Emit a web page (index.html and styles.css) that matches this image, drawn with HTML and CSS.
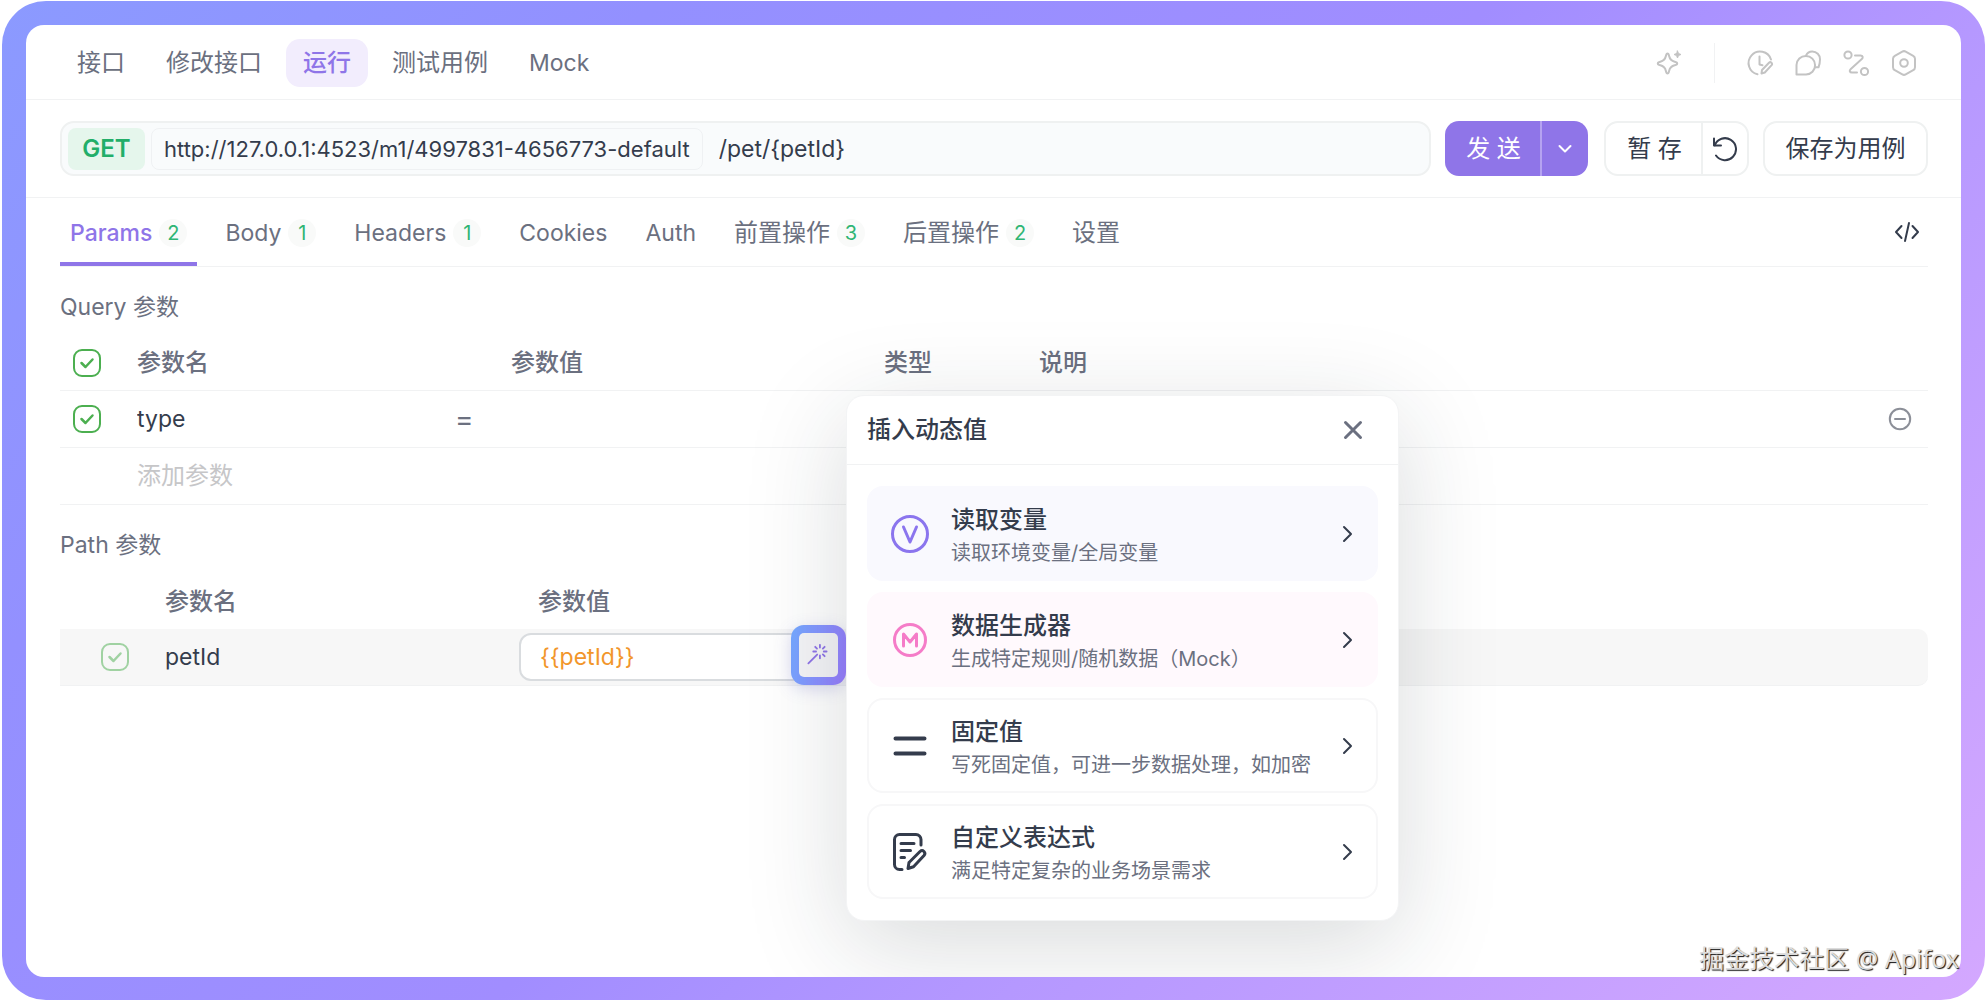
FILE: index.html
```html
<!DOCTYPE html>
<html lang="zh-CN">
<head>
<meta charset="utf-8">
<meta name="viewport" content="width=device-width, initial-scale=1">
<title>Apifox</title>
<link rel="stylesheet" href="styles.css">
</head>
<body>
<div class="frame">
  <main class="panel">
    <header class="topbar">
      <nav class="modes" aria-label="接口视图">
        <button class="mode" type="button">接口</button>
        <button class="mode" type="button">修改接口</button>
        <button class="mode mode-active" type="button">运行</button>
        <button class="mode" type="button">测试用例</button>
        <button class="mode latin" type="button">Mock</button>
      </nav>
      <div class="tools">
        <button class="tool" type="button" aria-label="AI">
          <svg width="28" height="28" viewBox="0 0 28 28"><path d="M12.500 4.500c.9 0 1.300 1.200 1.600 2.500.8 3.600 2 4.900 5.600 5.700 1.300.3 2.500.9 2.500 1.800s-1.200 1.500-2.500 1.800c-3.600.8-4.800 2.100-5.600 5.700-.3 1.300-.7 2.500-1.600 2.500s-1.300-1.200-1.600-2.500c-.8-3.600-2-4.900-5.600-5.700C4 16 2.800 15.400 2.800 14.500S4 13 5.300 12.700c3.600-.8 4.800-2.100 5.600-5.700.3-1.300.7-2.500 1.600-2.500z"/><path class="solid" d="M22.500 2l1 2.500L26 5.500l-2.500 1-1 2.500-1-2.500-2.500-1 2.500-1z"/></svg>
        </button>
        <span class="tools-divider"></span>
        <button class="tool" type="button" aria-label="历史记录">
          <svg width="28" height="28" viewBox="0 0 28 28"><path d="M11.500 25.300A11.500 11.500 0 1 1 25 10.500"/><path d="M13.500 7.500v8l3 .8"/><path d="M15.500 24.500l.5-3.500 7-7.300c1.600-1.500 4 .6 2.600 2.400l-6.800 7.400z"/></svg>
        </button>
        <button class="tool" type="button" aria-label="评论">
          <svg width="28" height="28" viewBox="0 0 28 28"><path d="M2.500 25.500v-9.500a9.300 9.300 0 1 1 9.500 9.500z"/><path d="M12 6.700C13 4 15.500 2.500 18.200 2.500c4.500 0 7.800 3.500 7.800 7.800 0 3-.5 5.500-1.500 8H21"/></svg>
        </button>
        <button class="tool" type="button" aria-label="流程">
          <svg width="28" height="28" viewBox="0 0 28 28"><circle cx="6" cy="6" r="3.600"/><circle cx="22.500" cy="22.500" r="3.600"/><path d="M13 6.500h5.500c2.500 0 2.800 2 1.300 3.600l-11 9.800c-1.800 1.700-1.200 3.600 1.200 3.600H15"/></svg>
        </button>
        <button class="tool" type="button" aria-label="设置">
          <svg width="28" height="28" viewBox="0 0 28 28"><path d="M12.300 2.600a3.500 3.500 0 0 1 3.400 0l7.500 4.200a3.500 3.500 0 0 1 1.800 3v8.400a3.500 3.500 0 0 1-1.800 3l-7.500 4.200a3.500 3.500 0 0 1-3.400 0l-7.500-4.200a3.500 3.500 0 0 1-1.800-3V9.800a3.500 3.500 0 0 1 1.800-3z"/><circle cx="14" cy="14" r="3.800"/></svg>
        </button>
      </div>
    </header>

    <form class="request">
      <div class="address">
        <select class="method" aria-label="请求方法"><option>GET</option></select>
        <button class="base-url" type="button">http://127.0.0.1:4523/m1/4997831-4656773-default</button>
        <input class="path latin" type="text" aria-label="接口路径" value="/pet/{petId}">
      </div>
      <div class="split split-primary">
        <button class="split-main" type="button">发 送</button>
        <button class="split-side" type="button" aria-label="更多发送选项">
          <svg width="14" height="10" viewBox="0 0 14 10"><path d="M1.500 2l5.500 5.500L12.500 2"/></svg>
        </button>
      </div>
      <div class="split split-plain">
        <button class="split-main" type="button">暂 存</button>
        <button class="split-side" type="button" aria-label="还原">
          <svg width="26" height="26" viewBox="0 0 26 26"><path d="M2 2.500v7h7"/><path d="M2.700 9.300A11 11 0 1 1 4 19.500"/></svg>
        </button>
      </div>
      <button class="save-case" type="button">保存为用例</button>
    </form>

    <div class="content">
      <nav class="tabs" aria-label="请求设置">
        <button class="tab tab-active latin" type="button">Params<span class="count">2</span></button>
        <button class="tab latin" type="button">Body<span class="count">1</span></button>
        <button class="tab latin" type="button">Headers<span class="count">1</span></button>
        <button class="tab latin" type="button">Cookies</button>
        <button class="tab latin" type="button">Auth</button>
        <button class="tab" type="button">前置操作<span class="count">3</span></button>
        <button class="tab" type="button">后置操作<span class="count">2</span></button>
        <button class="tab" type="button">设置</button>
        <button class="code" type="button" aria-label="生成代码">
          <svg width="26" height="24" viewBox="0 0 26 24"><path d="M7.500 6L2 12l5.500 6M18.500 6l5.500 6-5.500 6M15 3l-4 18"/></svg>
        </button>
      </nav>

      <section>
        <h2 class="section-title latin">Query 参数</h2>
        <table class="params">
          <colgroup><col class="c-check"><col class="c-name"><col class="c-value"><col class="c-type"><col><col class="c-action"></colgroup>
          <thead>
            <tr>
              <th><input class="check" type="checkbox" checked aria-label="全选"></th>
              <th>参数名</th><th>参数值</th><th>类型</th><th>说明</th><th></th>
            </tr>
          </thead>
          <tbody>
            <tr>
              <td><input class="check" type="checkbox" checked aria-label="启用 type"></td>
              <td><div class="name-cell"><input class="cell-input latin" type="text" aria-label="参数名" value="type"><span class="equals">=</span></div></td>
              <td></td><td></td><td></td>
              <td>
                <button class="remove" type="button" aria-label="删除参数">
                  <svg width="24" height="24" viewBox="0 0 24 24"><circle cx="12" cy="12" r="10.200"/><path d="M7 12h10"/></svg>
                </button>
              </td>
            </tr>
            <tr>
              <td></td>
              <td><input class="cell-input" type="text" aria-label="添加参数" placeholder="添加参数"></td>
              <td></td><td></td><td></td><td></td>
            </tr>
          </tbody>
        </table>
      </section>

      <section>
        <h2 class="section-title latin">Path 参数</h2>
        <table class="params params-path">
          <colgroup><col class="p-check"><col class="p-name"><col class="p-value"><col></colgroup>
          <thead>
            <tr><th></th><th>参数名</th><th class="value-head">参数值</th><th></th></tr>
          </thead>
          <tbody>
            <tr class="row-hover">
              <td><input class="check check-locked" type="checkbox" checked disabled aria-label="启用 petId"></td>
              <td class="latin">petId</td>
              <td>
                <div class="value-cell">
                  <input class="value-input latin" type="text" aria-label="petId 参数值" value="{{petId}}">
                  <button class="magic" type="button" aria-label="插入动态值">
                    <svg width="24" height="24" viewBox="1 0 26 26"><path d="M2.500 22L12 12.500M15 2v3M15 13.500v3M7.800 9.200h3M19.200 9.200h3M9.900 4.100l1.900 1.900M18.200 12.400l1.900 1.900M20.100 4.100L18.200 6"/></svg>
                  </button>
                  <div class="popover" role="dialog" aria-labelledby="popover-title">
                    <div class="popover-head">
                      <h3 class="popover-title" id="popover-title">插入动态值</h3>
                      <button class="close" type="button" aria-label="关闭">
                        <svg width="20" height="20" viewBox="0 0 20 20"><path d="M2.500 2.500l15 15M17.500 2.500l-15 15"/></svg>
                      </button>
                    </div>
                    <div class="options">
                      <button class="option option-variable" type="button">
                        <svg class="option-icon" width="40" height="40" viewBox="0 0 40 40"><circle cx="20" cy="20" r="17.500"/><path d="M13.500 13L20 28l6.500-15"/></svg>
                        <span class="option-text"><span class="option-name">读取变量</span><span class="option-note">读取环境变量/全局变量</span></span>
                        <svg class="chevron" width="12" height="20" viewBox="0 0 12 20"><path d="M2 3l7 7-7 7"/></svg>
                      </button>
                      <button class="option option-mock" type="button">
                        <svg class="option-icon" width="40" height="40" viewBox="0 0 40 40"><circle cx="20" cy="20" r="15.500"/><path d="M13.500 26V14l6.500 8 6.500-8v12"/></svg>
                        <span class="option-text"><span class="option-name">数据生成器</span><span class="option-note">生成特定规则/随机数据（Mock）</span></span>
                        <svg class="chevron" width="12" height="20" viewBox="0 0 12 20"><path d="M2 3l7 7-7 7"/></svg>
                      </button>
                      <button class="option" type="button">
                        <svg class="option-icon option-icon-bold" width="40" height="40" viewBox="0 0 40 40"><path d="M5.500 12.500h29M5.500 27.500h29"/></svg>
                        <span class="option-text"><span class="option-name">固定值</span><span class="option-note">写死固定值，可进一步数据处理，如加密</span></span>
                        <svg class="chevron" width="12" height="20" viewBox="0 0 12 20"><path d="M2 3l7 7-7 7"/></svg>
                      </button>
                      <button class="option" type="button">
                        <svg class="option-icon" width="40" height="40" viewBox="0 0 40 40"><path d="M12 37.500H9.500a5 5 0 0 1-5-5V7.500a5 5 0 0 1 5-5H26a5 5 0 0 1 5 5V13M11 11.500h13M11 18.500h9.500M11 25.500h3.500"/><path d="M18 36.500l1-6L30 19.500c2.800-2.600 6.400 1.200 4 4L23.500 34.700z"/></svg>
                        <span class="option-text"><span class="option-name">自定义表达式</span><span class="option-note">满足特定复杂的业务场景需求</span></span>
                        <svg class="chevron" width="12" height="20" viewBox="0 0 12 20"><path d="M2 3l7 7-7 7"/></svg>
                      </button>
                    </div>
                  </div>
                </div>
              </td>
              <td></td>
            </tr>
          </tbody>
        </table>
      </section>
    </div>
  </main>
  <p class="watermark">掘金技术社区 @ Apifox</p>
</div>
</body>
</html>
```

FILE: styles.css
```css
:root {
  --purple: #8f75e8;
  --ink: #343c4c;
  --muted: #6b7080;
  --line: #f1f2f3;
  --green: #4caf50;
}

* {
  box-sizing: border-box;
}

body {
  margin: 0;
  background: #fff;
  color: var(--ink);
  font: 24px/32px Inter, "Noto Sans CJK SC", sans-serif;
}

button,
input,
select {
  margin: 0;
  padding: 0;
  border: 0;
  background: none;
  color: inherit;
  font: inherit;
}

svg {
  display: block;
  flex: none;
  fill: none;
  stroke: currentColor;
  stroke-width: 2;
  stroke-linecap: round;
  stroke-linejoin: round;
}

.frame {
  position: relative;
  display: flex;
  min-height: calc(100vh - 2px);
  margin: 1px 0 1px 2px;
  padding: 24px 24px 23px;
  border-radius: 44px;
  background: linear-gradient(135deg, #8b9aff 0%, #9390ff 22%, #a18dff 50%, #b598ff 67%, #d4a8ff 100%);
}

.panel {
  flex: 1;
  min-width: 0;
  overflow: hidden;
  border-radius: 18px;
  background: #fff;
}

/* Top bar */
.topbar {
  display: flex;
  align-items: center;
  justify-content: space-between;
  padding: 14px 43px 12px 34px;
  border-bottom: 1px solid var(--line);
}

.modes,
.tools {
  display: flex;
  align-items: center;
}

.modes {
  gap: 7px;
}

.mode {
  height: 48px;
  padding: 0 17px;
  border-radius: 14px;
  color: var(--muted);
  white-space: nowrap;
}

.mode-active {
  background: #f2edfd;
  color: var(--purple);
  font-weight: 500;
}

.tools {
  gap: 20px;
  color: #c3c3c3;
}

.tool .solid {
  fill: currentColor;
  stroke-width: 1;
}

.tools-divider {
  width: 1px;
  height: 40px;
  margin: 0 11px;
  background: var(--line);
}

/* Request line */
.request {
  display: flex;
  padding: 21px 33px 21px 34px;
  border-bottom: 1px solid var(--line);
}

.address {
  display: flex;
  flex: 1;
  align-items: center;
  min-width: 0;
  height: 55px;
  padding: 0 6px;
  border: 2px solid #eff1f1;
  border-radius: 14px;
  background: #f9fbfc;
}

.method {
  width: 77px;
  height: 42px;
  border-radius: 8px;
  background: #e5f6ec;
  color: #22ae69;
  font-weight: 600;
  text-align: center;
  text-align-last: center;
  appearance: none;
}

.base-url {
  height: 42px;
  margin-left: 6px;
  padding: 0 12px;
  border: 1px solid #eff1f3;
  border-radius: 8px;
  font-size: 22px;
  white-space: nowrap;
}

.path {
  flex: 1;
  min-width: 0;
  margin-left: 16px;
}

.split {
  display: flex;
  height: 55px;
  border-radius: 14px;
}

.split-main {
  padding-left: 2px;
  white-space: nowrap;
}

.split-side {
  display: grid;
  place-items: center;
}

.split-primary {
  margin-left: 14px;
  background: var(--purple);
  color: #fff;
}

.split-primary .split-main {
  width: 95px;
}

.split-primary .split-side {
  width: 48px;
  border-left: 2px solid #b5a3f1;
}

.split-plain {
  margin-left: 16px;
  border: 2px solid #eff1f1;
}

.split-plain .split-main {
  width: 95px;
}

.split-plain .split-side {
  width: 46px;
  border-left: 2px solid #eff1f1;
}

.save-case {
  width: 165px;
  margin-left: 14px;
  border: 2px solid #eff1f1;
  border-radius: 14px;
  white-space: nowrap;
}

/* Tabs */
.content {
  padding: 0 33px 0 34px;
}

.tabs {
  display: flex;
  align-items: stretch;
  gap: 18px;
  border-bottom: 1px solid var(--line);
}

.tab {
  display: flex;
  align-items: center;
  gap: 7px;
  height: 68px;
  padding: 5px 10px 0;
  border-bottom: 4px solid transparent;
  color: var(--muted);
  white-space: nowrap;
}

.tab-active {
  border-color: var(--purple);
  color: var(--purple);
  font-weight: 500;
}

.count {
  width: 28px;
  border-radius: 14px;
  background: #f9faf9;
  color: #2fb574;
  font-size: 20px;
  font-weight: 400;
  line-height: 28px;
  text-align: center;
}

.code {
  margin-left: auto;
  padding: 0 8px;
}

/* Parameter tables */
.section-title {
  margin: 0;
  padding: 24px 0 11px;
  color: var(--muted);
  font-weight: 400;
}

.params {
  width: 100%;
  border-collapse: separate;
  border-spacing: 0;
  table-layout: fixed;
}

.c-check { width: 77px; }
.c-name { width: 374px; }
.c-value { width: 373px; }
.c-type { width: 155px; }
.c-action { width: 40px; }
.p-check { width: 105px; }
.p-name { width: 354px; }
.p-value { width: 327px; }

.params th,
.params td {
  height: 57px;
  padding: 0;
  border-bottom: 1px solid var(--line);
  text-align: left;
  vertical-align: middle;
}

.params th {
  padding-top: 2px;
  color: var(--muted);
  font-weight: 500;
}

.params-path th {
  border-bottom: 0;
}

.params-path .value-head {
  padding-left: 19px;
}

.row-hover td {
  background: #f7f7f7;
}

.row-hover td:last-child {
  border-radius: 0 10px 10px 0;
}

.check {
  display: block;
  width: 28px;
  height: 28px;
  margin-left: 13px;
  border: 2px solid var(--green);
  border-radius: 9px;
  background: center / 24px 24px no-repeat url("data:image/svg+xml,%3Csvg xmlns='http://www.w3.org/2000/svg' viewBox='0 0 24 24' fill='none' stroke='%234caf50' stroke-width='2.500' stroke-linecap='round' stroke-linejoin='round'%3E%3Cpath d='M6.500 12l4 4 7-7.500'/%3E%3C/svg%3E");
  appearance: none;
}

.check-locked {
  margin-left: 41px;
  opacity: 0.5;
}

.name-cell {
  display: flex;
}

.cell-input {
  flex: 1;
  min-width: 0;
  height: 32px;
}

.cell-input::placeholder {
  color: #c6c6c8;
  opacity: 1;
}

.equals {
  width: 56px;
  color: var(--muted);
  font-size: 28px;
}

.remove {
  display: block;
  color: #8c8f98;
}

.value-cell {
  position: relative;
}

.value-input {
  display: block;
  width: 100%;
  height: 48px;
  padding: 0 56px 0 19px;
  border: 2px solid #d9dcdf;
  border-radius: 12px;
  background: #fff;
  color: #f2962b;
}

/* Latin labels are set a step smaller, to sit evenly beside the Chinese ones */
.latin {
  font-size: 23px;
}

.magic {
  position: absolute;
  top: -8px;
  right: 0;
  display: grid;
  place-items: center;
  width: 55px;
  height: 60px;
  border: 8px solid transparent;
  border-radius: 13px;
  background:
    linear-gradient(#f4f4f7, #f4f4f7) padding-box,
    linear-gradient(100deg, #74a9ff, #9a7cff) border-box;
  box-shadow: 0 4px 16px rgba(110, 110, 200, 0.25);
  color: var(--purple);
}

/* Dynamic value popover */
.popover {
  position: absolute;
  top: -238px;
  left: 100%;
  z-index: 2;
  width: 553px;
  border: 1px solid #f3f4f5;
  border-radius: 18px;
  background: #fff;
  box-shadow: 0 24px 100px rgba(30, 40, 50, 0.17);
}

.popover-head {
  display: flex;
  align-items: center;
  justify-content: space-between;
  height: 69px;
  padding: 0 35px 0 20px;
  border-bottom: 1px solid var(--line);
}

.popover-title {
  margin: 0;
  font: inherit;
  font-weight: 500;
}

.close {
  color: var(--muted);
}

.close svg {
  stroke-width: 3;
}

.options {
  display: grid;
  gap: 11px;
  padding: 21px 20px;
}

.option {
  display: flex;
  align-items: center;
  height: 95px;
  padding: 0 22px 0 21px;
  border: 2px solid #f7f7f8;
  border-radius: 16px;
  text-align: left;
}

.option-icon {
  margin-right: 21px;
  stroke-width: 3;
}

.option-icon-bold {
  stroke-width: 4;
}

.option-variable {
  border-color: #f9f9fe;
  background: #f9f9fe;
}

.option-variable .option-icon {
  color: #8b75ee;
}

.option-mock {
  border-color: #fff9fd;
  background: #fff9fd;
}

.option-mock .option-icon {
  color: #f57cc8;
}

.option-text {
  display: grid;
  flex: 1;
  gap: 1px;
  padding-top: 5px;
  white-space: nowrap;
}

.option-name {
  font-weight: 500;
}

.option-note {
  color: var(--muted);
  font-size: 20px;
}

.watermark {
  position: absolute;
  right: 26px;
  bottom: 26px;
  margin: 0;
  color: #dcdcdc;
  font-family: "Noto Sans", "Noto Sans CJK SC", sans-serif;
  font-size: 25px;
  text-shadow: 1px 1px 1px #111;
}
```
